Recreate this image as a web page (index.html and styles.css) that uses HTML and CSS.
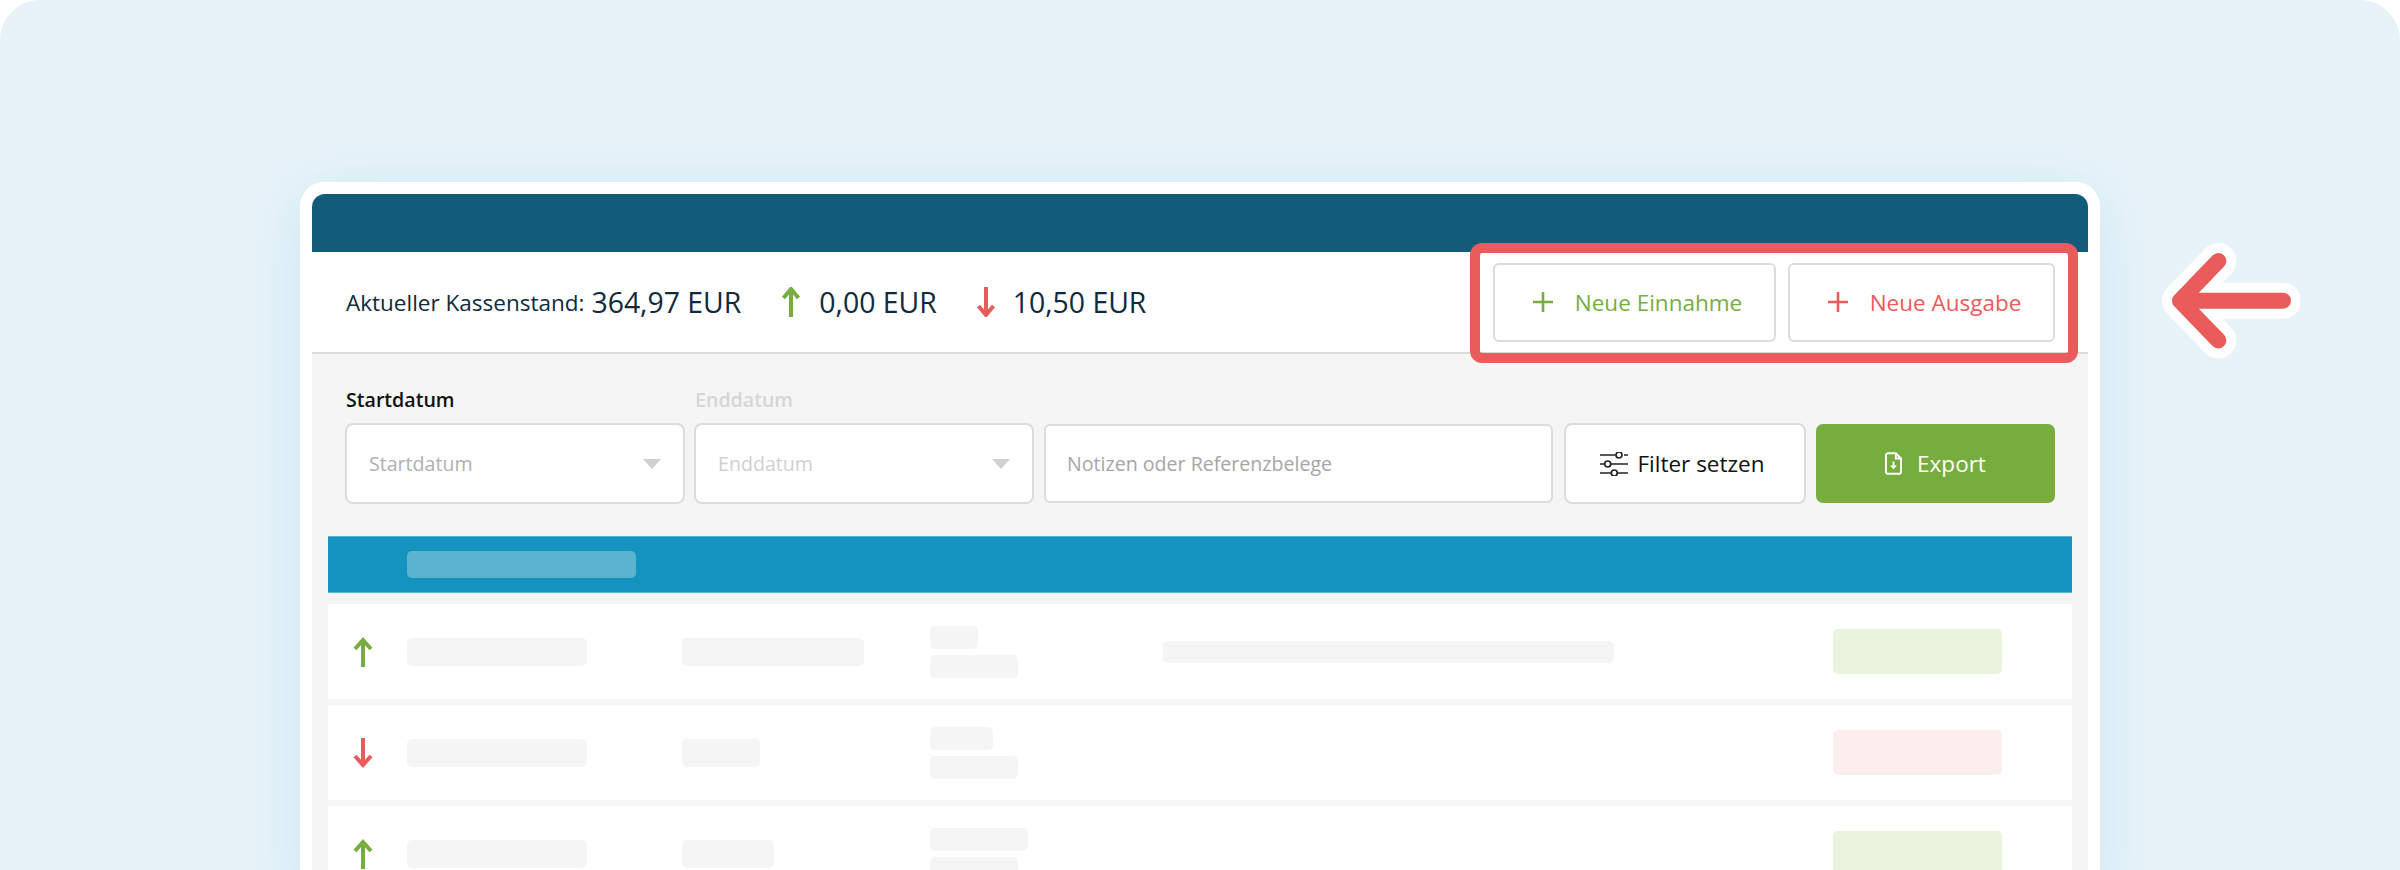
FILE: index.html
```html
<!DOCTYPE html>
<html lang="de">
<head>
<meta charset="utf-8">
<title>Kassenbuch</title>
<link rel="stylesheet" href="styles.css">
</head>
<body>
<div class="page">
  <main class="card">
    <div class="topbar"></div>
    <section class="summary">
      <div class="balance">
        <span class="label">Aktueller Kassenstand:</span>
        <strong class="amount">364,97 EUR</strong>
        <svg class="dir-icon up" viewBox="0 0 20 30"><path d="M10 30V2M2.5 11 10 2l7.5 9"/></svg>
        <strong class="amount">0,00 EUR</strong>
        <svg class="dir-icon down" viewBox="0 0 20 30"><path d="M10 0v28M2.5 19 10 28l7.5-9"/></svg>
        <strong class="amount">10,50 EUR</strong>
      </div>
      <div class="actions">
        <button class="btn-new income"><svg viewBox="0 0 20 20"><path d="M10 0v20M0 10h20"/></svg>Neue Einnahme</button>
        <button class="btn-new expense"><svg viewBox="0 0 20 20"><path d="M10 0v20M0 10h20"/></svg>Neue Ausgabe</button>
      </div>
    </section>
    <section class="content">
      <div class="filters">
        <div class="field">
          <label class="field-label">Startdatum</label>
          <div class="select"><span>Startdatum</span><i class="caret"></i></div>
        </div>
        <div class="field">
          <label class="field-label off">Enddatum</label>
          <div class="select off"><span>Enddatum</span><i class="caret"></i></div>
        </div>
        <div class="search">Notizen oder Referenzbelege</div>
        <button class="btn-filter">
          <svg viewBox="0 0 28 24"><path d="M0 3h15.5M24 3h4M0 12h4.500M11 12h17M0 21h11M18 21h10"/><circle cx="19" cy="3" r="3"/><circle cx="7.700" cy="12" r="3"/><circle cx="14.300" cy="21" r="3"/></svg>
          Filter setzen
        </button>
        <button class="btn-export">
          <svg viewBox="0 0 18 24"><path d="M11.500 1.200H3a2 2 0 0 0-2 2v17.600a2 2 0 0 0 2 2h12a2 2 0 0 0 2-2V6.700z"/><path d="M11.500 1.200v5.500H17"/><path class="solid" d="M8 10h2v4h2.600L9 18l-3.600-4H8z"/></svg>
          Export
        </button>
      </div>
      <div class="table-head"><span class="head-pill"></span></div>
      <div class="row">
        <svg class="row-icon up" viewBox="0 0 20 30"><path d="M10 30V3M2 12 10 3l8 9"/></svg>
        <div class="cell"><i class="ph w-180"></i></div>
        <div class="cell"><i class="ph w-182"></i></div>
        <div class="cell stack"><i class="ph small w-48"></i><i class="ph small w-88"></i></div>
        <div class="cell"><i class="ph note"></i></div>
        <div class="cell"><i class="amount-ph pos"></i></div>
      </div>
      <div class="row">
        <svg class="row-icon down" viewBox="0 0 20 30"><path d="M10 0v27M2 18l8 9 8-9"/></svg>
        <div class="cell"><i class="ph w-180"></i></div>
        <div class="cell"><i class="ph w-78"></i></div>
        <div class="cell stack"><i class="ph small w-63"></i><i class="ph small w-88"></i></div>
        <div class="cell"></div>
        <div class="cell"><i class="amount-ph neg"></i></div>
      </div>
      <div class="row">
        <svg class="row-icon up" viewBox="0 0 20 30"><path d="M10 30V3M2 12 10 3l8 9"/></svg>
        <div class="cell"><i class="ph w-180"></i></div>
        <div class="cell"><i class="ph w-92"></i></div>
        <div class="cell stack"><i class="ph small w-98"></i><i class="ph small w-88"></i></div>
        <div class="cell"></div>
        <div class="cell"><i class="amount-ph pos"></i></div>
      </div>
    </section>
  </main>
  <div class="highlight"></div>
  <svg class="pointer" viewBox="0 0 160 120">
    <path class="halo" d="M143 60.700H40M78.300 21 40 60.700l38.300 39.700"/>
    <path class="stroke" d="M143 60.700H40M78.300 21 40 60.700l38.300 39.700"/>
  </svg>
</div>
</body>
</html>
```
FILE: styles.css
```css
* { box-sizing: border-box; }
html, body { margin: 0; padding: 0; background: #fff; }
body { width: 2400px; height: 870px; overflow: hidden; font-family: "Open Sans", "Noto Sans", sans-serif; }
.page { position: relative; width: 2400px; height: 870px; padding: 182px 300px 0; background: #e7f3f9; border-radius: 40px 40px 0 0; overflow: hidden; }

.card { width: 1800px; height: 720px; border: 12px solid #fff; border-bottom: 0; border-radius: 24px 24px 0 0; background: #fff; box-shadow: 0 12px 60px rgba(20, 147, 191, .13); }
.topbar { height: 58px; background: #125c7a; border-radius: 13px 13px 0 0; }
.summary { display: flex; justify-content: space-between; align-items: center; height: 102px; padding: 0 33px 0 34px; border-bottom: 2px solid #dcdcdc; background: #fff; }
.balance { display: flex; align-items: center; }
.label { font-size: 22.5px; color: #0f2a3c; margin-right: 7px; }
.amount { font-size: 28.4px; font-weight: 500; color: #0f2a3c; }
.dir-icon { width: 20px; height: 30px; fill: none; stroke-width: 4; }
.dir-icon.up { margin: 0 18px 0 40px; }
.dir-icon.down { margin: 0 17px 0 39px; }
.up { stroke: #77ad3f; }
.down { stroke: #ea5b5b; }
.actions { display: flex; gap: 12px; }
.btn-new { display: flex; align-items: center; justify-content: center; height: 79px; padding: 0 0 0 6px; background: #fff; border: 2px solid #dcdcdc; border-radius: 6px; font: 400 22.5px "Open Sans", sans-serif; }
.btn-new svg { width: 20px; height: 20px; fill: none; stroke: currentColor; stroke-width: 2.6; margin-right: 22px; }
.income { width: 283px; color: #77ad3f; }
.expense { width: 267px; color: #ea5b5b; }

.content { height: 516px; background: #f5f5f5; padding: 0 16px; overflow: hidden; }
.filters { display: flex; align-items: flex-end; height: 150px; padding: 0 17px; }
.field { display: flex; flex-direction: column; width: 340px; margin-right: 9px; }
.field-label { padding-left: 1px; font-size: 19.6px; font-weight: 550; color: #111; line-height: 26px; margin-bottom: 10px; }
.field-label.off { color: #d6d6d6; }
.select { display: flex; align-items: center; justify-content: space-between; height: 81px; padding: 0 22px; background: #fff; border: 2px solid #dcdcdc; border-radius: 8px; font-size: 19.6px; color: #b0b0b0; }
.select.off { color: #d0d0d0; }
.caret { width: 0; height: 0; border-left: 9px solid transparent; border-right: 9px solid transparent; border-top: 10px solid #d0d0d0; }
.search { display: flex; align-items: center; width: 509px; height: 79px; margin: 0 11px 1px 1px; padding: 0 21px; background: #fff; border: 2px solid #dcdcdc; border-radius: 6px; font-size: 19.6px; color: #a6a6a6; }
.btn-filter { display: flex; align-items: center; justify-content: center; gap: 9px; width: 242px; height: 81px; margin-right: 10px; padding: 0 5px 0 0; background: #fff; border: 2px solid #dcdcdc; border-radius: 8px; font: 400 22.5px "Open Sans", sans-serif; color: #111; }
.btn-filter svg { width: 28px; height: 24px; fill: none; stroke: #222; stroke-width: 1.7; }
.btn-export { display: flex; align-items: center; justify-content: center; gap: 15px; width: 239px; height: 79px; margin-bottom: 1px; background: #77ad3f; border: 0; border-radius: 7px; font: 400 22.5px "Open Sans", sans-serif; color: #fff; }
.btn-export svg { width: 17px; height: 23px; fill: none; stroke: #fff; stroke-width: 2; }
.btn-export .solid { fill: #fff; stroke: none; }

.table-head { display: flex; align-items: center; height: 57px; margin-top: 32px; padding-left: 79px; background: #1593bf; border-top: 1px solid #5bb3d2; border-bottom: 1px solid #5bb3d2; }
.head-pill { width: 229px; height: 27px; background: #5bb3d2; border-radius: 5px; }
.row { display: grid; grid-template-columns: 79px 275px 248px 233px 670px 239px; align-items: center; height: 95px; margin-top: 6px; background: #fff; }
.table-head + .row { margin-top: 11px; }
.row-icon { width: 20px; height: 30px; justify-self: start; margin-left: 25px; fill: none; stroke-width: 4; }
.cell { display: flex; align-items: center; }
.stack { flex-direction: column; align-items: flex-start; gap: 6px; }
.ph { display: block; height: 28px; background: #f5f5f5; border-radius: 5px; }
.ph.small { height: 23px; }
.ph.note { width: 451px; height: 22px; }
.w-180 { width: 180px; } .w-182 { width: 182px; } .w-78 { width: 78px; } .w-92 { width: 92px; }
.w-48 { width: 48px; } .w-88 { width: 88px; } .w-63 { width: 63px; } .w-98 { width: 98px; }
.amount-ph { display: block; width: 169px; height: 45px; border-radius: 5px; }
.pos { background: #e9f3de; }
.neg { background: #fdeeee; }

.highlight { position: absolute; left: 1470px; top: 243px; width: 608px; height: 120px; border: 10px solid #ea5b5b; border-radius: 12px; }
.pointer { position: absolute; left: 2140px; top: 240px; width: 160px; height: 120px; fill: none; stroke-linecap: round; stroke-linejoin: round; }
.halo { stroke: #fff; stroke-width: 36; }
.stroke { stroke: #ea5b5b; stroke-width: 16; }
```
